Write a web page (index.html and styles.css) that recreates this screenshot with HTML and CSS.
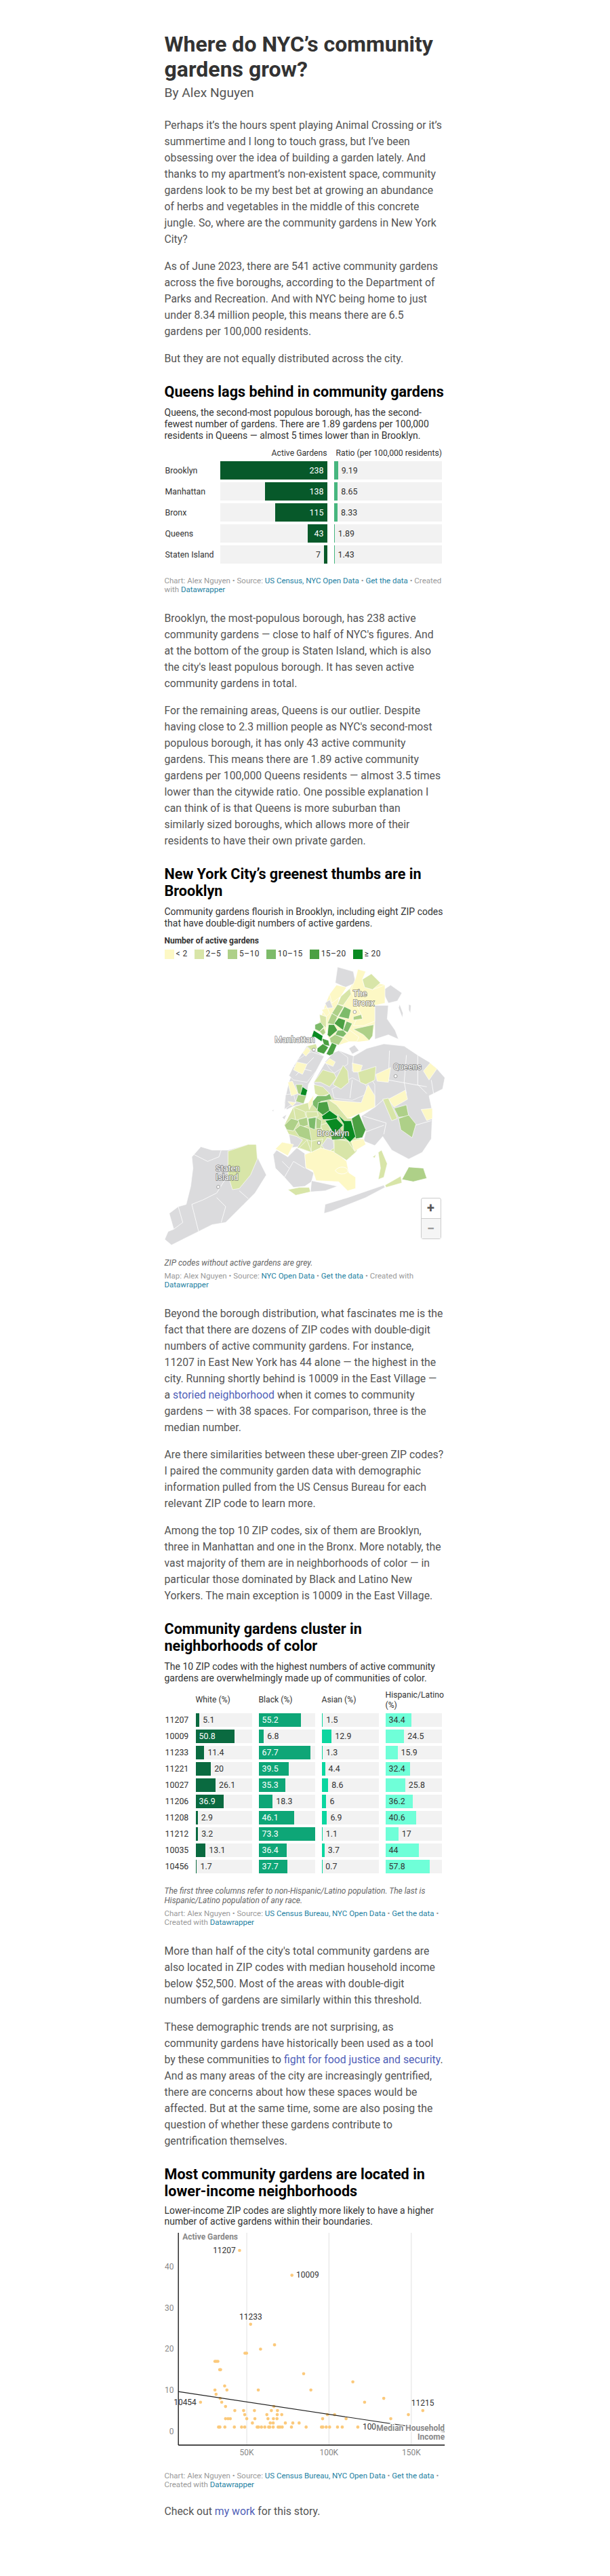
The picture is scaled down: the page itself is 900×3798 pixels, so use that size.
FILE: index.html
```html
<!DOCTYPE html>
<html lang="en">

<head>
  <meta charset="UTF-8">
  <meta name="viewport" content="width=device-width, initial-scale=1.0">
  <title>Where do NYC's community gardens grow?</title>
  <link rel="stylesheet" href="styles.css">
</head>

<body>
  <main class="article">
    <h1>Where do NYC’s community gardens grow?</h1>
    <div class="byline">By Alex Nguyen</div>

    <p>Perhaps it’s the hours spent playing Animal Crossing or it’s summertime and I long to touch grass, but I’ve been obsessing over the idea of building a garden lately. And thanks to my apartment’s non-existent space, community gardens look to be my best bet at growing an abundance of herbs and vegetables in the middle of this concrete jungle. So, where are the community gardens in New York City?</p>
    <p>As of June 2023, there are 541 active community gardens across the five boroughs, according to the Department of Parks and Recreation. And with NYC being home to just under 8.34 million people, this means there are 6.5<br>gardens per 100,000 residents.</p>
    <p>But they are not equally distributed across the city.</p>

    <!-- borough bars -->
    <section class="chart chart-borough">
      <h2>Queens lags behind in community gardens</h2>
      <div class="chart-desc">Queens, the second-most populous borough, has the second-<br>fewest number of gardens. There are 1.89 gardens per 100,000 residents in Queens — almost 5 times lower than in Brooklyn.</div>
      <div class="borough-grid">
        <div></div>
        <div class="col-head right">Active Gardens</div>
        <div class="col-head ratio-head">Ratio (per 100,000 residents)</div>

        <div class="row-label">Brooklyn</div>
        <div class="track reverse"><div class="bar bar-gardens in" style="width:100%">238</div></div>
        <div class="track"><div class="bar bar-ratio" style="width:3.86%"></div><span class="val">9.19</span></div>

        <div class="row-label">Manhattan</div>
        <div class="track reverse"><div class="bar bar-gardens in" style="width:58%">138</div></div>
        <div class="track"><div class="bar bar-ratio" style="width:3.63%"></div><span class="val">8.65</span></div>

        <div class="row-label">Bronx</div>
        <div class="track reverse"><div class="bar bar-gardens in" style="width:48.3%">115</div></div>
        <div class="track"><div class="bar bar-ratio" style="width:3.5%"></div><span class="val">8.33</span></div>

        <div class="row-label">Queens</div>
        <div class="track reverse"><div class="bar bar-gardens in" style="width:18.07%">43</div></div>
        <div class="track"><div class="bar bar-ratio" style="width:.79%"></div><span class="val">1.89</span></div>

        <div class="row-label">Staten Island</div>
        <div class="track reverse"><div class="bar bar-gardens" style="width:2.94%"></div><span class="val">7</span></div>
        <div class="track"><div class="bar bar-ratio" style="width:.6%"></div><span class="val">1.43</span></div>
      </div>
      <div class="chart-source">Chart: Alex Nguyen • Source: <a href="#">US Census, NYC Open Data</a> • <a href="#">Get the data</a> • Created with <a href="#">Datawrapper</a></div>
    </section>

    <p>Brooklyn, the most-populous borough, has 238 active community gardens — close to half of NYC's figures. And<br>at the bottom of the group is Staten Island, which is also the city's least populous borough. It has seven active community gardens in total.</p>
    <p>For the remaining areas, Queens is our outlier. Despite having close to 2.3 million people as NYC's second-most populous borough, it has only 43 active community gardens. This means there are 1.89 active community gardens per 100,000 Queens residents — almost 3.5 times lower than the citywide ratio. One possible explanation I can think of is that Queens is more suburban than<br>similarly sized boroughs, which allows more of their residents to have their own private garden.</p>

    <!-- zip code map -->
    <section class="chart chart-map">
      <h2>New York City’s greenest thumbs are in Brooklyn</h2>
      <div class="chart-desc">Community gardens flourish in Brooklyn, including eight ZIP codes that have double-digit numbers of active gardens.</div>
      <div class="legend-title">Number of active gardens</div>
      <div class="legend">
        <div class="legend-item"><span class="swatch c1"></span>&lt; 2</div>
        <div class="legend-item"><span class="swatch c2"></span>2–5</div>
        <div class="legend-item"><span class="swatch c3"></span>5–10</div>
        <div class="legend-item"><span class="swatch c4"></span>10–15</div>
        <div class="legend-item"><span class="swatch c5"></span>15–20</div>
        <div class="legend-item"><span class="swatch c6"></span>≥ 20</div>
      </div>
      <div class="map-wrap">
        <svg class="map" viewBox="70 -60 1242 1290" width="414" height="430">
          <!-- land under the zips, so no gaps show -->
          <g class="land">
            <path class="c1" d="M850 90L890 55 915 10 1045 40 1045 120 1000 130 1000 210 990 265 975 285 930 290 885 290 840 305 805 295 790 260 790 210 810 165 835 125Z"/>
            <path class="c1" d="M800 80L850 60 835 125 790 210 780 260 735 240 760 190 780 130Z"/>
            <path class="grey" d="M610 590L600 560 620 470 660 370 700 310 775 355 740 420 705 480 697 530 685 565 640 575Z"/>
            <path class="grey" d="M730 470L780 385 840 330 905 355 1000 480 1000 580 880 630 830 570 800 520 760 535Z"/>
            <path class="c2" d="M600 660L640 580 725 555 760 535 800 520 880 630 897 630 915 720 950 720 915 780 875 815 830 780 760 760 720 780 660 760 620 700Z"/>
          </g>
          <!-- grey zips -->
          <g class="grey">
            <path d="M70 1165L85 1130 110 1120 90 1050 130 1020 165 1010 185 930 195 850 190 800 230 755 280 770 350 770 440 745 475 745 480 800 520 880 470 960 420 1010 340 1090 280 1100 220 1130 150 1165 100 1190Z"/>
            <path d="M835 -40L905 -20 915 30 870 50 825 30Z"/>
            <path d="M1040 60L1070 40 1120 75 1100 110 1060 120 1045 90Z"/>
            <path d="M1000 130L1060 130 1055 190 1090 240 1105 280 1060 260 1000 280 1000 210Z"/>
            <path d="M1110 125L1125 165 1122 185 1105 140Z"/>
            <path d="M1150 125L1160 130 1158 165 1150 150Z"/>
            <path d="M780 120L800 105 815 140 790 142Z"/>
            <path d="M660 370L690 350 720 335 775 355 740 420 700 470 640 460 620 440 640 400Z"/>
            <path d="M605 525L640 520 650 560 620 575 600 590Z"/>
            <path d="M885 320L910 305 930 330 900 345Z"/>
            <path d="M965 320L1040 300 1130 310 1190 350 1240 380 1275 410 1310 450 1300 500 1240 530 1255 600 1250 720 1210 780 1150 810 1075 770 1035 710 1000 750 950 730 960 690 940 620 1000 580 1000 480 960 420 900 420 905 355Z"/>
            <path d="M840 330L880 360 880 390 820 430 800 410 780 380 815 340Z"/>
            <path d="M810 500L900 450 960 480 970 520 900 550 820 540Z"/>
            <path d="M790 715L815 725 820 760 790 780 765 750Z"/>
            <path d="M620 700L655 710 680 725 660 755 630 760Z"/>
            <path d="M550 790L565 770 615 800 655 760 690 785 695 850 730 870 720 910 690 930 640 935 600 890 560 850Z"/>
            <path d="M720 905L835 930 780 950 715 955Z"/>
            <path d="M775 1050L780 1010 880 980 1040 925 1045 935 960 980 810 1040Z"/>
            <path d="M590 625L610 612 600 635Z"/>
            <path d="M545 595L555 590 550 600Z"/>
          </g>
          <!-- zip borders inside the grey areas -->
          <g class="seams">
            <path d="M1140 350L1130 470 1140 520"/>
            <path d="M1060 460L1230 490"/>
            <path d="M1000 580L1040 545"/>
            <path d="M1065 330L1060 460"/>
            <path d="M1190 350L1190 480 1230 520"/>
            <path d="M950 620L1050 650 1040 700"/>
            <path d="M1180 660L1250 640"/>
            <path d="M960 690L1040 660"/>
            <path d="M900 460L890 540"/>
            <path d="M200 790L260 820 310 800 320 770"/>
            <path d="M350 880L300 960 240 990 190 1010 220 1130"/>
            <path d="M300 980L340 1020 320 1090"/>
            <path d="M130 1020L150 1090 110 1120"/>
            <path d="M400 950L440 985"/>
            <path d="M600 890L640 820 690 850"/>
            <path d="M590 820L620 850"/>
            <path d="M640 400L720 420"/>
            <path d="M650 440L730 360"/>
            <path d="M1250 460L1260 520"/>
          </g>
          <!-- under 2 -->
          <g class="c1">
            <path d="M915 10L925 -30 960 -20 945 15 955 50 990 60 1045 40 1045 120 1000 130 1000 200 950 220 905 220 930 170 945 180 920 130 895 60Z"/>
            <path d="M800 80L830 40 875 50 850 90 810 120Z"/>
            <path d="M765 150L790 140 800 165 785 180Z"/>
            <path d="M860 270L890 240 930 270 920 290 885 290Z"/>
            <path d="M680 340L700 315 715 330 695 355Z"/>
            <path d="M655 380L700 390 680 435 640 415Z"/>
            <path d="M615 470L635 465 660 520 630 530Z"/>
            <path d="M615 555L650 560 635 575Z"/>
            <path d="M800 365L825 380 815 400 780 385Z"/>
            <path d="M900 385L945 395 935 425 905 425Z"/>
            <path d="M1005 435L1070 405 1060 470 1010 465Z"/>
            <path d="M1215 420L1245 385 1275 410 1240 460Z"/>
            <path d="M970 480L1000 530 1000 580 880 630 830 570 800 550 820 550 940 560Z"/>
            <path d="M1060 545L1135 505 1145 545 1085 580Z"/>
            <path d="M1205 590L1255 585 1255 630 1230 640Z"/>
            <path d="M705 560L730 525 725 560 710 590Z"/>
            <path d="M895 730L950 720 960 745 910 775Z"/>
            <path d="M560 765L590 735 640 745 615 795Z"/>
            <path d="M690 790L760 760 830 780 875 820 885 870 915 890 915 940 880 950 840 910 740 905 725 860 695 850Z"/>
          </g>
          <path class="creek" d="M825 860C845 835 885 845 880 865 870 880 835 880 825 860"/>
          <!-- 2 to 5 -->
          <g class="c2">
            <path d="M350 775L440 745 475 745 480 810 450 880 400 940 370 945 350 880Z"/>
            <path d="M945 15L985 -10 1025 30 990 60 955 50Z"/>
            <path d="M850 90L890 55 895 80 860 130 835 125Z"/>
            <path d="M755 170L785 180 785 230 760 210Z"/>
            <path d="M700 310L740 300 745 320 720 330Z"/>
            <path d="M730 470L770 415 820 430 830 450 800 490 760 470Z"/>
            <path d="M815 480L860 395 880 420 885 470 850 500Z"/>
            <path d="M925 425L1005 400 1000 460 960 480 935 470Z"/>
            <path d="M1035 545L1060 540 1100 630 1075 640Z"/>
            <path d="M730 480L770 490 800 520 760 535 735 520Z"/>
            <path d="M640 580L690 600 695 625 650 640Z"/>
            <path d="M695 600L745 600 750 620 700 630Z"/>
            <path d="M758 660L790 650 810 690 770 685Z"/>
            <path d="M720 730L770 720 760 760 718 780Z"/>
            <path d="M665 760L700 725 720 780Z"/>
            <path d="M820 720L880 730 915 780 875 815 820 780Z"/>
            <path d="M615 945L665 935 710 935 715 955 650 970Z"/>
            <path d="M1045 925L1115 885 1120 915 1050 935Z"/>
            <path d="M1015 780L1030 770 1055 830 1040 890 1015 900 1025 850Z"/>
            <path d="M990 800L1005 790 1000 805Z"/>
          </g>
          <!-- 5 to 10 -->
          <g class="c3">
            <path d="M835 125L862 135 835 180 810 165Z"/>
            <path d="M810 165L835 180 820 215 790 210Z"/>
            <path d="M905 180L940 170 945 190 905 195Z"/>
            <path d="M800 275L825 258 860 275 840 305 805 295Z"/>
            <path d="M905 235L995 215 990 265 975 285 950 260Z"/>
            <path d="M755 245L775 230 782 250 770 262Z"/>
            <path d="M650 480L680 480 675 525 660 520Z"/>
            <path d="M660 525L697 530 685 565 650 555Z"/>
            <path d="M1085 585L1140 570 1150 620 1105 625Z"/>
            <path d="M1105 630L1150 615 1182 655 1165 715 1115 680Z"/>
            <path d="M600 660L630 630 665 640 640 685 610 680Z"/>
            <path d="M660 635L700 625 705 660 670 670Z"/>
            <path d="M740 625L765 640 760 675 740 675Z"/>
            <path d="M645 680L670 660 710 675 720 730 665 710Z"/>
            <path d="M1120 900L1150 845 1215 850 1230 895 1170 910Z"/>
          </g>
          <!-- 10 to 15 -->
          <g class="c4">
            <path d="M865 135L895 150 885 190 840 180Z"/>
            <path d="M875 200L900 210 880 250 860 240Z"/>
            <path d="M835 240L860 240 875 255 860 270 825 260Z"/>
            <path d="M735 215L760 205 775 225 755 245 735 235Z"/>
            <path d="M725 555L745 530 785 530 800 520 810 545 760 555 745 590 725 570Z"/>
            <path d="M705 630L740 625 735 680 710 670Z"/>
          </g>
          <!-- 15 to 20 -->
          <g class="c5">
            <path d="M840 185L870 195 860 240 820 210Z"/>
            <path d="M795 215L820 215 835 240 800 270 790 260Z"/>
            <path d="M765 275L795 285 800 310 775 305Z"/>
            <path d="M745 320L770 300 795 315 775 345 745 335Z"/>
            <path d="M785 345L810 295 832 305 815 345 800 352Z"/>
            <path d="M750 560L790 555 800 595 770 615 745 595Z"/>
            <path d="M897 630L930 610 960 680 945 715 915 720Z"/>
            <path d="M800 680L830 700 860 690 880 720 810 725Z"/>
          </g>
          <!-- 20 and up -->
          <g class="c6">
            <path d="M720 270L730 240 770 265 765 290 735 270Z"/>
            <path d="M680 490L702 505 695 530 670 525Z"/>
            <path d="M765 620L800 595 835 620 830 635 770 635Z"/>
            <path d="M780 640L830 630 860 660 820 700 795 660Z"/>
            <path d="M835 612L865 640 895 640 915 710 890 735 860 710 862 655Z"/>
          </g>
          <g class="map-dots">
            <circle cx="911" cy="159" r="7"/>
            <circle cx="730" cy="326" r="7"/>
            <circle cx="1092" cy="443" r="7"/>
            <circle cx="753" cy="738" r="7"/>
            <circle cx="307" cy="933" r="7"/>
          </g>
          <g class="map-labels">
            <text x="903" y="77">The</text>
            <text x="903" y="119">Bronx</text>
            <text x="557" y="283">Manhattan</text>
            <text x="1082" y="401">Queens</text>
            <text x="744" y="695">Brooklyn</text>
            <text x="296" y="851">Staten</text>
            <text x="296" y="892">Island</text>
          </g>
        </svg>
        <div class="zoom-ctrl">
          <div class="zoom-btn">+</div>
          <div class="zoom-btn minus">−</div>
        </div>
      </div>
      <div class="chart-note">ZIP codes without active gardens are grey.</div>
      <div class="chart-source">Map: Alex Nguyen • Source: <a href="#">NYC Open Data</a> • <a href="#">Get the data</a> • Created with <a href="#">Datawrapper</a></div>
    </section>

    <p>Beyond the borough distribution, what fascinates me is the fact that there are dozens of ZIP codes with double-digit numbers of active community gardens. For instance, 11207 in East New York has 44 alone — the highest in the city. Running shortly behind is 10009 in the East Village —<br>a <a href="#">storied neighborhood</a> when it comes to community gardens — with 38 spaces. For comparison, three is the median number.</p>
    <p>Are there similarities between these uber-green ZIP codes? I paired the community garden data with demographic information pulled from the US Census Bureau for each relevant ZIP code to learn more.</p>
    <p>Among the top 10 ZIP codes, six of them are Brooklyn, three in Manhattan and one in the Bronx. More notably, the vast majority of them are in neighborhoods of color — in particular those dominated by Black and Latino New Yorkers. The main exception is 10009 in the East Village.</p>

    <!-- demographics table -->
    <section class="chart chart-demo">
      <h2>Community gardens cluster in neighborhoods of color</h2>
      <div class="chart-desc">The 10 ZIP codes with the highest numbers of active community gardens are overwhelmingly made up of communities of color.</div>
      <div class="demo-grid">
        <div></div>
        <div class="col-head">White (%)</div>
        <div class="col-head">Black (%)</div>
        <div class="col-head">Asian (%)</div>
        <div class="col-head">Hispanic/Latino (%)</div>

        <div class="row-label">11207</div>
        <div class="track"><div class="bar w" style="width:6.96%"></div><span class="val">5.1</span></div>
        <div class="track"><div class="bar b in" style="width:75.3%">55.2</div></div>
        <div class="track"><div class="bar a" style="width:2.05%"></div><span class="val">1.5</span></div>
        <div class="track"><div class="bar h in" style="width:46.93%">34.4</div></div>

        <div class="row-label">10009</div>
        <div class="track"><div class="bar w in" style="width:69.3%">50.8</div></div>
        <div class="track"><div class="bar b" style="width:9.28%"></div><span class="val">6.8</span></div>
        <div class="track"><div class="bar a" style="width:17.6%"></div><span class="val">12.9</span></div>
        <div class="track"><div class="bar h" style="width:33.42%"></div><span class="val">24.5</span></div>

        <div class="row-label">11233</div>
        <div class="track"><div class="bar w" style="width:15.55%"></div><span class="val">11.4</span></div>
        <div class="track"><div class="bar b in" style="width:92.36%">67.7</div></div>
        <div class="track"><div class="bar a" style="width:1.77%"></div><span class="val">1.3</span></div>
        <div class="track"><div class="bar h" style="width:21.69%"></div><span class="val">15.9</span></div>

        <div class="row-label">11221</div>
        <div class="track"><div class="bar w" style="width:27.28%"></div><span class="val">20</span></div>
        <div class="track"><div class="bar b in" style="width:53.89%">39.5</div></div>
        <div class="track"><div class="bar a" style="width:6%"></div><span class="val">4.4</span></div>
        <div class="track"><div class="bar h in" style="width:44.2%">32.4</div></div>

        <div class="row-label">10027</div>
        <div class="track"><div class="bar w" style="width:35.6%"></div><span class="val">26.1</span></div>
        <div class="track"><div class="bar b in" style="width:48.16%">35.3</div></div>
        <div class="track"><div class="bar a" style="width:11.73%"></div><span class="val">8.6</span></div>
        <div class="track"><div class="bar h" style="width:35.2%"></div><span class="val">25.8</span></div>

        <div class="row-label">11206</div>
        <div class="track"><div class="bar w in" style="width:50.34%">36.9</div></div>
        <div class="track"><div class="bar b" style="width:24.97%"></div><span class="val">18.3</span></div>
        <div class="track"><div class="bar a" style="width:8.19%"></div><span class="val">6</span></div>
        <div class="track"><div class="bar h in" style="width:49.39%">36.2</div></div>

        <div class="row-label">11208</div>
        <div class="track"><div class="bar w" style="width:3.96%"></div><span class="val">2.9</span></div>
        <div class="track"><div class="bar b in" style="width:62.89%">46.1</div></div>
        <div class="track"><div class="bar a" style="width:9.41%"></div><span class="val">6.9</span></div>
        <div class="track"><div class="bar h in" style="width:55.39%">40.6</div></div>

        <div class="row-label">11212</div>
        <div class="track"><div class="bar w" style="width:4.37%"></div><span class="val">3.2</span></div>
        <div class="track"><div class="bar b in" style="width:100%">73.3</div></div>
        <div class="track"><div class="bar a" style="width:1.5%"></div><span class="val">1.1</span></div>
        <div class="track"><div class="bar h" style="width:23.19%"></div><span class="val">17</span></div>

        <div class="row-label">10035</div>
        <div class="track"><div class="bar w" style="width:17.87%"></div><span class="val">13.1</span></div>
        <div class="track"><div class="bar b in" style="width:49.66%">36.4</div></div>
        <div class="track"><div class="bar a" style="width:5.05%"></div><span class="val">3.7</span></div>
        <div class="track"><div class="bar h in" style="width:60.03%">44</div></div>

        <div class="row-label">10456</div>
        <div class="track"><div class="bar w" style="width:2.32%"></div><span class="val">1.7</span></div>
        <div class="track"><div class="bar b in" style="width:51.43%">37.7</div></div>
        <div class="track"><div class="bar a" style="width:.95%"></div><span class="val">0.7</span></div>
        <div class="track"><div class="bar h in" style="width:78.85%">57.8</div></div>
      </div>
      <div class="chart-note">The first three columns refer to non-Hispanic/Latino population. The last is Hispanic/Latino population of any race.</div>
      <div class="chart-source">Chart: Alex Nguyen • Source: <a href="#">US Census Bureau, NYC Open Data</a> • <a href="#">Get the data</a> •<br>Created with <a href="#">Datawrapper</a></div>
    </section>

    <p>More than half of the city's total community gardens are also located in ZIP codes with median household income below $52,500. Most of the areas with double-digit numbers of gardens are similarly within this threshold.</p>
    <p>These demographic trends are not surprising, as community gardens have historically been used as a tool by these communities to <a href="#">fight for food justice and security</a>. And as many areas of the city are increasingly gentrified, there are concerns about how these spaces would be affected. But at the same time, some are also posing the question of whether these gardens contribute to gentrification themselves.</p>

    <!-- income scatter -->
    <section class="chart chart-scatter">
      <h2>Most community gardens are located in lower-income neighborhoods</h2>
      <div class="chart-desc">Lower-income ZIP codes are slightly more likely to have a higher number of active gardens within their boundaries.</div>
      <svg class="scatter" viewBox="70 190 1242 1000" width="414" height="333">
        <g class="grid">
          <line x1="433" y1="190" x2="433" y2="1130"/>
          <line x1="797" y1="190" x2="797" y2="1130"/>
          <line x1="1162" y1="190" x2="1162" y2="1130"/>
        </g>
        <g class="dots">
          <circle cx="401" cy="268" r="7"/><circle cx="633" cy="378" r="7"/><circle cx="450" cy="595" r="7"/><circle cx="556" cy="686" r="7"/><circle cx="494" cy="705" r="7"/>
          <circle cx="425" cy="723" r="7"/><circle cx="432" cy="723" r="7"/><circle cx="292" cy="759" r="7"/><circle cx="298" cy="759" r="7"/><circle cx="305" cy="759" r="7"/>
          <circle cx="313" cy="796" r="7"/><circle cx="317" cy="796" r="7"/><circle cx="685" cy="814" r="7"/><circle cx="903" cy="850" r="7"/><circle cx="335" cy="868" r="7"/>
          <circle cx="292" cy="886" r="7"/><circle cx="345" cy="886" r="7"/><circle cx="484" cy="886" r="7"/><circle cx="717" cy="886" r="7"/><circle cx="297" cy="905" r="7"/>
          <circle cx="1040" cy="923" r="7"/><circle cx="315" cy="923" r="7"/><circle cx="228" cy="940" r="7"/><circle cx="322" cy="940" r="7"/><circle cx="955" cy="940" r="7"/>
          <circle cx="339" cy="959" r="7"/><circle cx="553" cy="959" r="7"/><circle cx="380" cy="977" r="7"/><circle cx="419" cy="977" r="7"/><circle cx="467" cy="977" r="7"/>
          <circle cx="542" cy="977" r="7"/><circle cx="569" cy="977" r="7"/><circle cx="1213" cy="977" r="7"/><circle cx="424" cy="995" r="7"/><circle cx="522" cy="995" r="7"/>
          <circle cx="568" cy="995" r="7"/><circle cx="588" cy="995" r="7"/><circle cx="790" cy="995" r="7"/><circle cx="822" cy="995" r="7"/><circle cx="1149" cy="995" r="7"/>
          <circle cx="339" cy="1013" r="7"/><circle cx="350" cy="1013" r="7"/><circle cx="360" cy="1013" r="7"/><circle cx="433" cy="1013" r="7"/><circle cx="469" cy="1013" r="7"/>
          <circle cx="527" cy="1013" r="7"/><circle cx="551" cy="1013" r="7"/><circle cx="567" cy="1013" r="7"/><circle cx="769" cy="1013" r="7"/><circle cx="873" cy="1013" r="7"/>
          <circle cx="1071" cy="1013" r="7"/><circle cx="458" cy="1032" r="7"/><circle cx="537" cy="1032" r="7"/><circle cx="550" cy="1032" r="7"/><circle cx="604" cy="1032" r="7"/>
          <circle cx="637" cy="1032" r="7"/><circle cx="665" cy="1032" r="7"/><circle cx="308" cy="1050" r="7"/><circle cx="314" cy="1050" r="7"/><circle cx="336" cy="1050" r="7"/>
          <circle cx="378" cy="1050" r="7"/><circle cx="410" cy="1050" r="7"/><circle cx="424" cy="1050" r="7"/><circle cx="479" cy="1050" r="7"/><circle cx="485" cy="1050" r="7"/>
          <circle cx="498" cy="1050" r="7"/><circle cx="513" cy="1050" r="7"/><circle cx="530" cy="1050" r="7"/><circle cx="535" cy="1050" r="7"/><circle cx="550" cy="1050" r="7"/>
          <circle cx="572" cy="1050" r="7"/><circle cx="580" cy="1050" r="7"/><circle cx="590" cy="1050" r="7"/><circle cx="631" cy="1050" r="7"/><circle cx="696" cy="1050" r="7"/>
          <circle cx="764" cy="1050" r="7"/><circle cx="770" cy="1050" r="7"/><circle cx="785" cy="1050" r="7"/><circle cx="800" cy="1050" r="7"/><circle cx="835" cy="1050" r="7"/>
          <circle cx="856" cy="1050" r="7"/><circle cx="925" cy="1050" r="7"/>
        </g>
        <line class="trend" x1="130" y1="893" x2="1310" y2="1071"/>
        <line class="axis" x1="130" y1="190" x2="130" y2="1130"/>
        <line class="axis" x1="130" y1="1130" x2="1310" y2="1130"/>
        <g class="ticks">
          <text x="110" y="341" text-anchor="end">40</text>
          <text x="110" y="523" text-anchor="end">30</text>
          <text x="110" y="705" text-anchor="end">20</text>
          <text x="110" y="887" text-anchor="end">10</text>
          <text x="110" y="1069" text-anchor="end">0</text>
          <text x="433" y="1164" text-anchor="middle">50K</text>
          <text x="797" y="1164" text-anchor="middle">100K</text>
          <text x="1162" y="1164" text-anchor="middle">150K</text>
        </g>
        <g class="zips">
          <text x="283" y="268">11207</text>
          <text x="652" y="377">10009</text>
          <text x="400" y="561">11233</text>
          <text x="109" y="940">10454</text>
          <text x="1162" y="943">11215</text>
          <text x="946" y="1049">100</text>
        </g>
        <g class="axis-title">
          <text x="148" y="209">Active Gardens</text>
          <text x="1310" y="1055" text-anchor="end">Median Household</text>
          <text x="1310" y="1093" text-anchor="end">Income</text>
        </g>
      </svg>
      <div class="chart-source">Chart: Alex Nguyen • Source: <a href="#">US Census Bureau, NYC Open Data</a> • <a href="#">Get the data</a> •<br>Created with <a href="#">Datawrapper</a></div>
    </section>

    <p>Check out <a href="#">my work</a> for this story.</p>
  </main>
</body>

</html>
```

FILE: styles.css
```css
body {
  margin: 0;
  background-color: #fff;
  font-family: Roboto, Arial, sans-serif;
}

.article {
  width: 415px;
  margin: 0 auto;
  padding: 47px 0 83px;
}

h1 {
  margin: 0;
  font-size: 32px;
  line-height: 1.15;
  font-weight: 700;
  color: #333;
}

.byline {
  margin-top: 5px;
  font-size: 19.2px;
  line-height: 22px;
  color: #555;
}

p {
  margin: 16px 0 0;
  font-size: 15.8px;
  line-height: 24px;
  color: #555;
}

.byline + p {
  margin-top: 25px;
}

p a {
  color: #5161b8;
  text-decoration: none;
}

h2 {
  margin: 0;
  font-size: 21.6px;
  line-height: 25px;
  font-weight: 700;
  color: #000;
}

.chart {
  margin: 24px 0;
}

.chart-desc {
  margin-top: 10px;
  font-size: 14px;
  line-height: 17px;
  color: #333;
}

.chart-source {
  margin-top: 6px;
  font-size: 11.5px;
  line-height: 13px;
  color: #999;
}

.chart-source a {
  color: #1d81a2;
  text-decoration: none;
}

.chart-note {
  margin-top: 6px;
  font-size: 12px;
  line-height: 14px;
  font-style: italic;
  color: #666;
}

.col-head {
  align-self: end;
  font-size: 12.2px;
  line-height: 15px;
  color: #333;
}

.right {
  text-align: right;
}

.ratio-head {
  padding-left: 3px;
}

.row-label {
  display: flex;
  align-items: center;
  padding-left: 1px;
  font-size: 12.4px;
  white-space: nowrap;
  color: #333;
}

.track {
  display: flex;
  align-items: stretch;
  background-color: #f2f2f2;
}

.track.reverse {
  flex-direction: row-reverse;
}

.bar {
  flex: none;
  display: flex;
  align-items: center;
  font-size: 12.4px;
  color: #fff;
}

.bar.in {
  padding-left: 5px;
  box-sizing: border-box;
}

.val {
  align-self: center;
  padding: 0 5px;
  font-size: 12.4px;
  color: #333;
}

/* borough chart */
.borough-grid {
  display: grid;
  grid-template-columns: 72px 158px 159px;
  grid-template-rows: 15px repeat(5, 27px);
  column-gap: 10px;
  row-gap: 4px;
  margin-top: 10px;
}

.borough-grid .col-head {
  white-space: nowrap;
}

.bar-gardens {
  justify-content: flex-end;
  background-color: #07592a;
}

.bar-gardens.in {
  padding: 0 5px 0 0;
}

.bar-ratio {
  background-color: #47b67f;
}

.chart-borough .chart-source,
.chart-scatter .chart-source {
  margin-top: 19px;
}

/* map */
.legend-title {
  margin-top: 10px;
  font-size: 12px;
  line-height: 15px;
  font-weight: 700;
  color: #333;
}

.legend {
  display: flex;
  gap: 10px;
  margin-top: 5px;
}

.legend-item {
  display: flex;
  gap: 3px;
  font-size: 12px;
  line-height: 13px;
  letter-spacing: .4px;
  color: #333;
}

.swatch {
  width: 14px;
  height: 14px;
}

.swatch.c1 { background-color: #fdf8c5; }
.swatch.c2 { background-color: #d8e5a8; }
.swatch.c3 { background-color: #aed088; }
.swatch.c4 { background-color: #7dbb6a; }
.swatch.c5 { background-color: #4ba043; }
.swatch.c6 { background-color: #098a22; }

.map-wrap {
  position: relative;
  margin-top: 5px;
}

.map {
  display: block;
}

.map path {
  stroke: #fff;
  stroke-width: 2;
  stroke-linejoin: round;
}

.map .land path {
  stroke: none;
}

.map .seams path,
.map .creek {
  fill: none;
  stroke-width: 2.5;
}

.map .grey { fill: #dbdbdd; }
.map .c1 { fill: #fdf8c5; }
.map .c2 { fill: #d8e5a8; }
.map .c3 { fill: #aed088; }
.map .c4 { fill: #7dbb6a; }
.map .c5 { fill: #4ba043; }
.map .c6 { fill: #098a22; }

.map-dots circle {
  fill: #fff;
  stroke: #777;
  stroke-width: 2;
}

.map-labels text {
  font-size: 37px;
  dominant-baseline: central;
  fill: #fff;
  stroke: rgba(70, 70, 70, .65);
  stroke-width: 5px;
  paint-order: stroke;
}

.zoom-ctrl {
  position: absolute;
  right: 7px;
  bottom: 22px;
  width: 28px;
  border: 1px solid #ccc;
  border-radius: 3px;
  background-color: #fff;
}

.zoom-btn {
  height: 29px;
  font-size: 20px;
  line-height: 28px;
  font-weight: 700;
  text-align: center;
  color: #555;
}

.zoom-btn.minus {
  border-top: 1px solid #ccc;
  background-color: #f5f5f5;
  color: #999;
}

/* demographics table */
.demo-grid {
  display: grid;
  grid-template-columns: 36px 83px 83px 84px 83px;
  grid-template-rows: 30px repeat(10, 20px);
  column-gap: 10px;
  row-gap: 4px;
  margin-top: 9px;
}

.demo-grid .col-head {
  align-self: center;
}

.bar.w { background-color: #0a6a40; }
.bar.b { background-color: #0ea677; }
.bar.a { background-color: #0bd6a0; }
.bar.h { background-color: #6fffd8; color: #333; }

.chart-demo .chart-note {
  margin-top: 19px;
}

/* scatter */
.scatter {
  display: block;
  margin-top: 9px;
  overflow: visible;
}

.chart-scatter .chart-desc {
  margin-top: 8px;
  line-height: 16px;
}

.chart-scatter {
  margin-bottom: 21px;
}

.grid line {
  stroke: #e0e0e0;
  stroke-width: 3;
}

.dots circle {
  fill: #fbc97b;
}

.trend {
  stroke: #222;
  stroke-width: 3.5;
}

.axis {
  stroke: #111;
  stroke-width: 4;
}

.scatter text {
  font-size: 36px;
  dominant-baseline: central;
}

.ticks text {
  fill: #888;
}

.zips text {
  fill: #333;
}

.axis-title text {
  font-weight: 700;
  fill: #888;
  stroke: #fff;
  stroke-width: 8px;
  paint-order: stroke;
}
```
